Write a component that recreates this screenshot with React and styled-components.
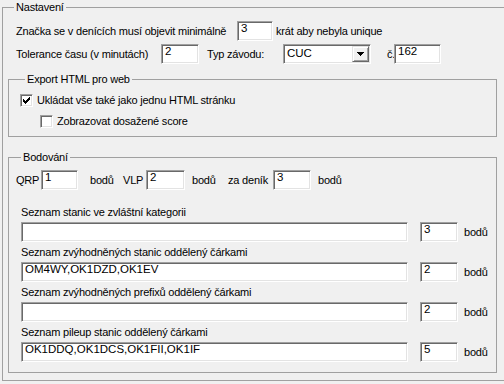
import React from 'react';
import styled, { createGlobalStyle } from 'styled-components';

const Global = createGlobalStyle`
  html, body { margin: 0; padding: 0; background: #f0f0f0; overflow: hidden; }
  body {
    font-family: "Liberation Sans", Arial, sans-serif;
    font-size: 11px;
    letter-spacing: -0.2px;
    color: #000;
    width: 504px;
    height: 384px;
  }
`;

const Group = styled.fieldset`
  box-sizing: border-box;
  width: ${(p) => p.$w}px;
  min-width: 0;
  margin: ${(p) => p.$mt || 0}px 0 0 ${(p) => p.$ml || 0}px;
  padding: ${(p) => p.$pad};
  border: 1px solid #a0a0a0;
  ${(p) => (p.$open ? 'border-right: none;' : '')}
`;

const Legend = styled.legend`
  margin-left: ${(p) => p.$ml}px;
  padding: 0 2px;
  line-height: 14px;
  font-size: 11px;
`;

const Line = styled.div`
  display: flex;
  align-items: center;
  height: ${(p) => p.$h || 20}px;
  margin-top: ${(p) => p.$mt || 0}px;
  padding-left: ${(p) => p.$pl || 0}px;
`;

const Text = styled.span`
  flex: none;
  white-space: nowrap;
  width: ${(p) => (p.$w ? `${p.$w}px` : 'auto')};
  margin-left: ${(p) => p.$ml || 0}px;
  line-height: 13px;
`;

const Field = styled.input`
  flex: none;
  box-sizing: border-box;
  width: ${(p) => p.$w}px;
  height: 20px;
  margin: 0 0 0 ${(p) => p.$ml || 0}px;
  padding: 0 0 6px 3px;
  border: 1px solid;
  border-color: #a0a0a0 #ffffff #ffffff #a0a0a0;
  box-shadow: inset 1px 1px 0 #696969, inset -1px -1px 0 #e3e3e3;
  background: #fff;
  font: 11.5px "Liberation Sans", Arial, sans-serif;
  letter-spacing: 0;
  color: #000;
  outline: none;
`;

const Combo = styled.div`
  flex: none;
  box-sizing: border-box;
  width: ${(p) => p.$w}px;
  height: 20px;
  display: flex;
  padding: 1px;
  border: 1px solid;
  border-color: #a0a0a0 #ffffff #ffffff #a0a0a0;
  box-shadow: inset 1px 1px 0 #696969, inset -1px -1px 0 #e3e3e3;
  background: #fff;
`;

const ComboValue = styled.span`
  flex: 1;
  padding: 1px 0 0 2px;
  line-height: 13px;
  font-size: 11.5px;
  letter-spacing: 0;
`;

const DropButton = styled.span`
  box-sizing: border-box;
  width: 17px;
  height: 16px;
  display: flex;
  align-items: center;
  justify-content: center;
  background: #f0f0f0;
  border: 1px solid;
  border-color: #e3e3e3 #696969 #696969 #e3e3e3;
  box-shadow: inset 1px 1px 0 #fff, inset -1px -1px 0 #a0a0a0;
`;

const CheckRow = styled.label`
  display: flex;
  align-items: center;
  height: 15px;
  margin-top: ${(p) => p.$mt || 0}px;
  margin-left: ${(p) => p.$ml || 0}px;
`;

const CheckBox = styled.span`
  box-sizing: border-box;
  flex: none;
  width: 13px;
  height: 13px;
  display: flex;
  align-items: center;
  justify-content: center;
  border: 1px solid;
  border-color: #a0a0a0 #ffffff #ffffff #a0a0a0;
  box-shadow: inset 1px 1px 0 #696969, inset -1px -1px 0 #e3e3e3;
  background: #fff;
`;

const CheckLabel = styled.span`
  margin-left: 4px;
  white-space: nowrap;
  line-height: 13px;
`;

const ListBlock = styled.div`
  margin-left: 5px;
`;

const ListLabel = styled.div`
  margin-top: ${(p) => p.$mt}px;
  line-height: 13px;
  white-space: nowrap;
`;

const CheckMark = () => (
  <svg width="7" height="7" viewBox="0 0 7 7" shapeRendering="crispEdges">
    <path
      d="M6 0h1v3h-1zM5 1h1v3h-1zM4 2h1v3h-1zM0 2h1v3h-1zM1 3h1v3h-1zM2 4h1v3h-1zM3 3h1v3h-1z"
      fill="#000"
    />
  </svg>
);

const Arrow = () => (
  <svg width="7" height="4" viewBox="0 0 7 4" shapeRendering="crispEdges">
    <path d="M0 0h7v1h-7zM1 1h5v1h-5zM2 2h3v1h-3zM3 3h1v1h-1z" fill="#000" />
  </svg>
);

const Check = ({ checked, children, mt, ml }) => (
  <CheckRow $mt={mt} $ml={ml}>
    <CheckBox>{checked && <CheckMark />}</CheckBox>
    <CheckLabel>{children}</CheckLabel>
  </CheckRow>
);

const lists = [
  { label: 'Seznam stanic ve zvláštní kategorii', value: '', points: '3' },
  { label: 'Seznam zvýhodněných stanic oddělený čárkami', value: 'OM4WY,OK1DZD,OK1EV', points: '2' },
  { label: 'Seznam zvýhodněných prefixů oddělený čárkami', value: '', points: '2' },
  { label: 'Seznam pileup stanic oddělený čárkami', value: 'OK1DDQ,OK1DCS,OK1FII,OK1IF', points: '5' },
];

export default function App() {
  return (
    <>
      <Global />
      <Group $w={502} $ml={2} $pad="0 0 7px 5px" $open>
        <Legend $ml={6}>Nastavení</Legend>
        <Line $mt={7} $pl={8}>
          <Text $w={221}>Značka se v denících musí objevit minimálně</Text>
          <Field $w={36} defaultValue="3" readOnly />
          <Text $ml={3}>krát aby nebyla unique</Text>
        </Line>
        <Line $mt={3} $pl={8}>
          <Text $w={145}>Tolerance času (v minutách)</Text>
          <Field $w={38} defaultValue="2" readOnly />
          <Text $ml={8} $w={76}>Typ závodu:</Text>
          <Combo $w={88}>
            <ComboValue>CUC</ComboValue>
            <DropButton>
              <Arrow />
            </DropButton>
          </Combo>
          <Text $ml={16} $w={7}>č.</Text>
          <Field $w={47} defaultValue="162" readOnly />
        </Line>

        <Group $w={489} $mt={8} $pad="7px 0 7px 11px">
          <Legend $ml={5}>Export HTML pro web</Legend>
          <Check checked>Ukládat vše také jako jednu HTML stránku</Check>
          <Check mt={6} ml={20}>Zobrazovat dosažené score</Check>
        </Group>

        <Group $w={489} $mt={13} $pad="6px 0 10px 7px">
          <Legend $ml={5}>Bodování</Legend>
          <Line>
            <Text $w={25}>QRP</Text>
            <Field $w={37} defaultValue="1" readOnly />
            <Text $ml={12} $w={33}>bodů</Text>
            <Text $w={23}>VLP</Text>
            <Field $w={39} defaultValue="2" readOnly />
            <Text $ml={7} $w={36}>bodů</Text>
            <Text $w={45}>za deník</Text>
            <Field $w={38} defaultValue="3" readOnly />
            <Text $ml={7}>bodů</Text>
          </Line>
          <ListBlock>
            {lists.map((item, i) => (
              <React.Fragment key={item.label}>
                <ListLabel $mt={i === 0 ? 16 : 4}>{item.label}</ListLabel>
                <Line $mt={3}>
                  <Field $w={387} defaultValue={item.value} readOnly />
                  <Field $ml={12} $w={38} defaultValue={item.points} readOnly />
                  <Text $ml={6}>bodů</Text>
                </Line>
              </React.Fragment>
            ))}
          </ListBlock>
        </Group>
      </Group>
    </>
  );
}
